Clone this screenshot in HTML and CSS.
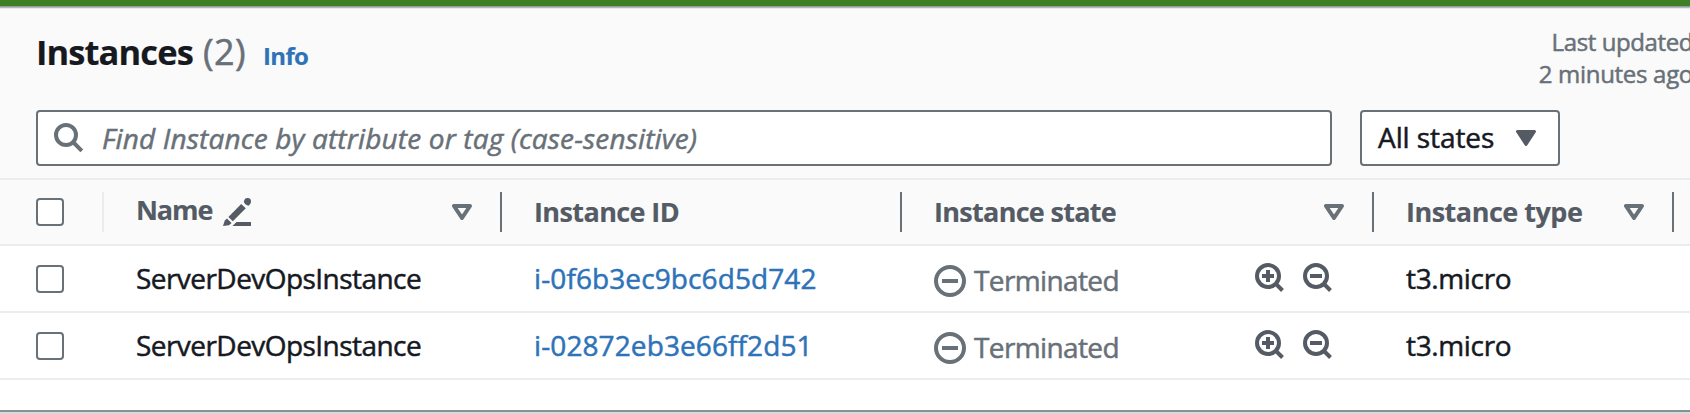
FILE: index.html
```html
<!DOCTYPE html>
<html lang="en">
<head>
<meta charset="utf-8">
<title>Instances</title>
<link rel="stylesheet" href="styles.css">
</head>
<body>
<svg class="defs" width="0" height="0" aria-hidden="true">
  <symbol id="sort" viewBox="0 0 20 16"><path d="M2 2h16l-8 12z" fill="none" stroke="currentColor" stroke-width="4" stroke-linejoin="round"/></symbol>
  <symbol id="minus-circle" viewBox="0 0 32 32"><circle cx="16" cy="16" r="14" fill="none" stroke="currentColor" stroke-width="4"/><path d="M8 16h16" stroke="currentColor" stroke-width="4"/></symbol>
  <symbol id="zoom-in" viewBox="0 0 30 30"><g fill="none" stroke="currentColor" stroke-width="4"><circle cx="13" cy="13" r="11"/><path d="M20.5 20.5l7 7M7 13h12M13 7v12"/></g></symbol>
  <symbol id="zoom-out" viewBox="0 0 30 30"><g fill="none" stroke="currentColor" stroke-width="4"><circle cx="13" cy="13" r="11"/><path d="M20.5 20.5l7 7M7 13h12"/></g></symbol>
</svg>
<main class="panel">
  <header class="header">
    <div class="title-row">
      <h1 class="title">Instances</h1>
      <span class="count">(2)</span>
      <a class="info">Info</a>
      <p class="updated"><span class="updated-label">Last updated</span><br><span class="updated-time">2 minutes ago</span></p>
    </div>
    <div class="filters">
      <div class="search">
        <svg class="search-icon" viewBox="0 0 30 30"><g fill="none" stroke="currentColor" stroke-width="4"><circle cx="12" cy="12" r="10"/><path d="M19 19l8.8 8.8"/></g></svg>
        <span class="placeholder">Find Instance by attribute or tag (case-sensitive)</span>
      </div>
      <div class="select">
        <span class="select-label">All states</span>
        <svg class="caret" viewBox="0 0 20 16"><path d="M1.5 1.5h17L10 14.5z" fill="currentColor" stroke="currentColor" stroke-width="3" stroke-linejoin="round"/></svg>
      </div>
    </div>
  </header>
  <section class="table">
    <div class="row head">
      <div class="cell check light"><span class="box"></span></div>
      <div class="cell"><span class="name-label">Name</span><svg class="pencil" viewBox="0 0 28 28"><g fill="currentColor"><path d="M0 28l1.8-5.6 2.2-1.8 4.6 4.5-2.6 2.1z"/><path d="M5.4 19L18.2 5.9l4.6 4.3L9.8 23.2z"/><circle cx="24.6" cy="3.5" r="3.4"/><path d="M20.6 3.6l2-2 4.4 4.3-1.9 2z"/><path d="M9.5 28l4-4H28v4z"/></g></svg><svg class="sort"><use href="#sort"/></svg></div>
      <div class="cell"><span class="id-label">Instance ID</span></div>
      <div class="cell"><span class="state-label">Instance state</span><svg class="sort"><use href="#sort"/></svg></div>
      <div class="cell"><span class="type-label">Instance type</span><svg class="sort"><use href="#sort"/></svg></div>
    </div>
    <div class="row">
      <div class="cell check"><span class="box"></span></div>
      <div class="cell"><span class="name">ServerDevOpsInstance</span></div>
      <div class="cell"><a class="id">i-0f6b3ec9bc6d5d742</a></div>
      <div class="cell"><svg class="status-icon"><use href="#minus-circle"/></svg><span class="status">Terminated</span><span class="tools"><svg class="tool"><use href="#zoom-in"/></svg><svg class="tool"><use href="#zoom-out"/></svg></span></div>
      <div class="cell"><span class="type">t3.micro</span></div>
    </div>
    <div class="row">
      <div class="cell check"><span class="box"></span></div>
      <div class="cell"><span class="name">ServerDevOpsInstance</span></div>
      <div class="cell"><a class="id">i-02872eb3e66ff2d51</a></div>
      <div class="cell"><svg class="status-icon"><use href="#minus-circle"/></svg><span class="status">Terminated</span><span class="tools"><svg class="tool"><use href="#zoom-in"/></svg><svg class="tool"><use href="#zoom-out"/></svg></span></div>
      <div class="cell"><span class="type">t3.micro</span></div>
    </div>
  </section>
</main>
</body>
</html>
```
FILE: styles.css
```css
* { box-sizing: border-box; }
body {
  margin: 0;
  height: 414px;
  overflow: hidden;
  background: #fff;
  color: #16191f;
  font: 28px/36px "Open Sans", sans-serif;
  -webkit-text-stroke: 0.5px currentColor;
}
svg { display: block; flex: none; overflow: visible; }
.defs { position: absolute; }
.panel {
  height: 414px;
  display: flex;
  flex-direction: column;
  border-top: 6px solid #3f8024;
  border-bottom: 2px solid #d5dbdb;
  box-shadow: inset 0 -2px #879196;
}
.header {
  height: 174px;
  padding-left: 36px;
  background: #fafafa;
  border-bottom: 2px solid #eaeded;
  box-shadow: inset 0 1px #959ba1, inset 0 2px #b4b9bd, inset 0 3px #e6e8e9;
}
.title-row {
  height: 104px;
  padding-top: 24px;
  display: flex;
  align-items: baseline;
}
.title { margin: 0; font-size: 34.5px; line-height: 44px; letter-spacing: -0.9px; width: 167px; flex: none; }
.count { font-size: 36px; line-height: 44px; color: #687078; letter-spacing: 0.4px; width: 60px; }
.info { font-size: 24px; font-weight: 700; letter-spacing: -0.67px; color: #2e73b8; }
.updated {
  margin: -4px -3px 0 auto;
  align-self: flex-start;
  text-align: right;
  white-space: nowrap;
  font-size: 24px;
  line-height: 32px;
  color: #687078;
}
.updated-label { letter-spacing: -0.4px; }
.updated-time { letter-spacing: -0.3px; }
.title, .info, .head { -webkit-text-stroke-width: 0.15px; }
.filters { display: flex; gap: 28px; }
.search, .select {
  height: 56px;
  display: flex;
  align-items: center;
  background: #fff;
  border: 2px solid #687078;
  border-radius: 4px;
}
.search { width: 1296px; padding-left: 16px; color: #687078; }
.search-icon { width: 30px; height: 30px; margin-right: 18px; }
.placeholder { font-style: italic; letter-spacing: 0.16px; }
.select { width: 200px; padding: 0 22px 0 16px; justify-content: space-between; }
.select-label { letter-spacing: -0.08px; padding-bottom: 2px; }
.caret { width: 20px; height: 16px; color: #545b64; }
.row {
  display: grid;
  grid-template-columns: 104px 398px 400px 472px 300px;
  height: 67px;
  border-bottom: 2px solid #eaeded;
}
.cell { display: flex; align-items: center; padding: 0 28px 0 32px; white-space: nowrap; }
.check { padding-left: 36px; }
.box { width: 28px; height: 28px; background: #fff; border: 2px solid #687078; border-radius: 4px; }
.head { height: 66px; padding: 12px 0; background: #fafafa; color: #545b64; font-size: 27px; font-weight: 700; }
.head .cell { border-right: 2px solid #687078; }
.head .light { border-color: #eaeded; }
.sort { width: 20px; height: 16px; margin-left: auto; color: #687078; }
.name-label { letter-spacing: -1.1px; padding-bottom: 4px; width: 87px; }
.id-label { letter-spacing: -0.6px; }
.state-label { letter-spacing: -0.7px; }
.type-label { letter-spacing: -0.5px; }
.pencil { width: 28px; height: 28px; }
.name, .id, .type { padding-bottom: 2px; }
.name { letter-spacing: -0.55px; }
.id { letter-spacing: 0.1px; color: #2e73b8; }
.status-icon { width: 32px; height: 32px; margin: 5px 8px 0 0; color: #687078; }
.status { padding-top: 2px; letter-spacing: -0.62px; color: #687078; }
.tools { display: flex; gap: 18px; margin: 0 13px 2px auto; color: #545b64; }
.tool { width: 30px; height: 30px; }
.type { letter-spacing: -0.35px; }
```
